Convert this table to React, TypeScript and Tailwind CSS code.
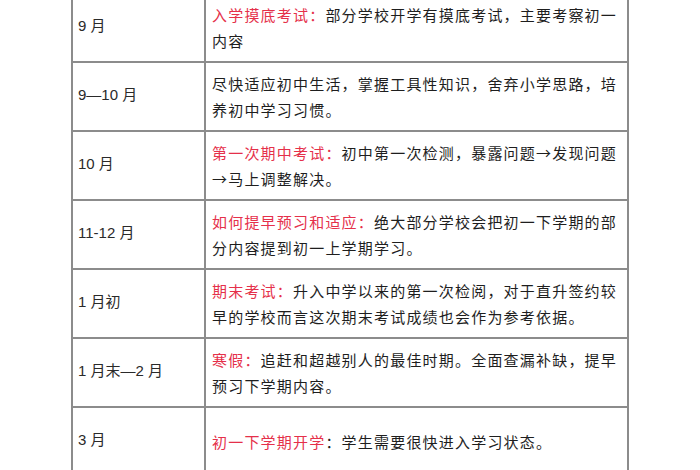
const rows: { month: string; red?: string; text: string }[] = [
  { month: '9 月', red: '入学摸底考试：', text: '部分学校开学有摸底考试，主要考察初一内容' },
  { month: '9—10 月', text: '尽快适应初中生活，掌握工具性知识，舍弃小学思路，培养初中学习习惯。' },
  { month: '10 月', red: '第一次期中考试：', text: '初中第一次检测，暴露问题→发现问题→马上调整解决。' },
  { month: '11-12 月', red: '如何提早预习和适应：', text: '绝大部分学校会把初一下学期的部分内容提到初一上学期学习。' },
  { month: '1 月初', red: '期末考试：', text: '升入中学以来的第一次检阅，对于直升签约较早的学校而言这次期末考试成绩也会作为参考依据。' },
  { month: '1 月末—2 月', red: '寒假：', text: '追赶和超越别人的最佳时期。全面查漏补缺，提早预习下学期内容。' },
  { month: '3 月', red: '初一下学期开学', text: '：学生需要很快进入学习状态。' },
];

export default function App() {
  return (
    <div className="w-[700px] h-[470px] overflow-hidden bg-white">
      <div className="ml-[71px] -mt-[6px] w-[558px] border-l-2 border-r-2 border-[#8c8c8c]">
        {rows.map((r, i) => (
          <div key={i} className="flex h-[69px] border-b-2 border-[#8c8c8c]">
            <div
              className="w-[133px] shrink-0 border-r-2 border-[#8c8c8c] flex items-center pl-[5px] pb-[2px] text-[15px] text-[#2a2a2a]"
              style={{ fontFamily: '"Liberation Sans", "Noto Sans CJK SC", sans-serif' }}
            >
              {r.month}
            </div>
            <div
              className="flex-1 flex items-center pl-[6px] pr-[6px] text-[15px] leading-[26px] tracking-[1.2px] text-[#1e1e1e]"
              style={{ fontFamily: '"Noto Sans CJK SC", sans-serif' }}
            >
              <p className="w-[408px]">
                {r.red && <span className="text-[#e5304a]">{r.red}</span>}
                {r.text}
              </p>
            </div>
          </div>
        ))}
      </div>
    </div>
  );
}
